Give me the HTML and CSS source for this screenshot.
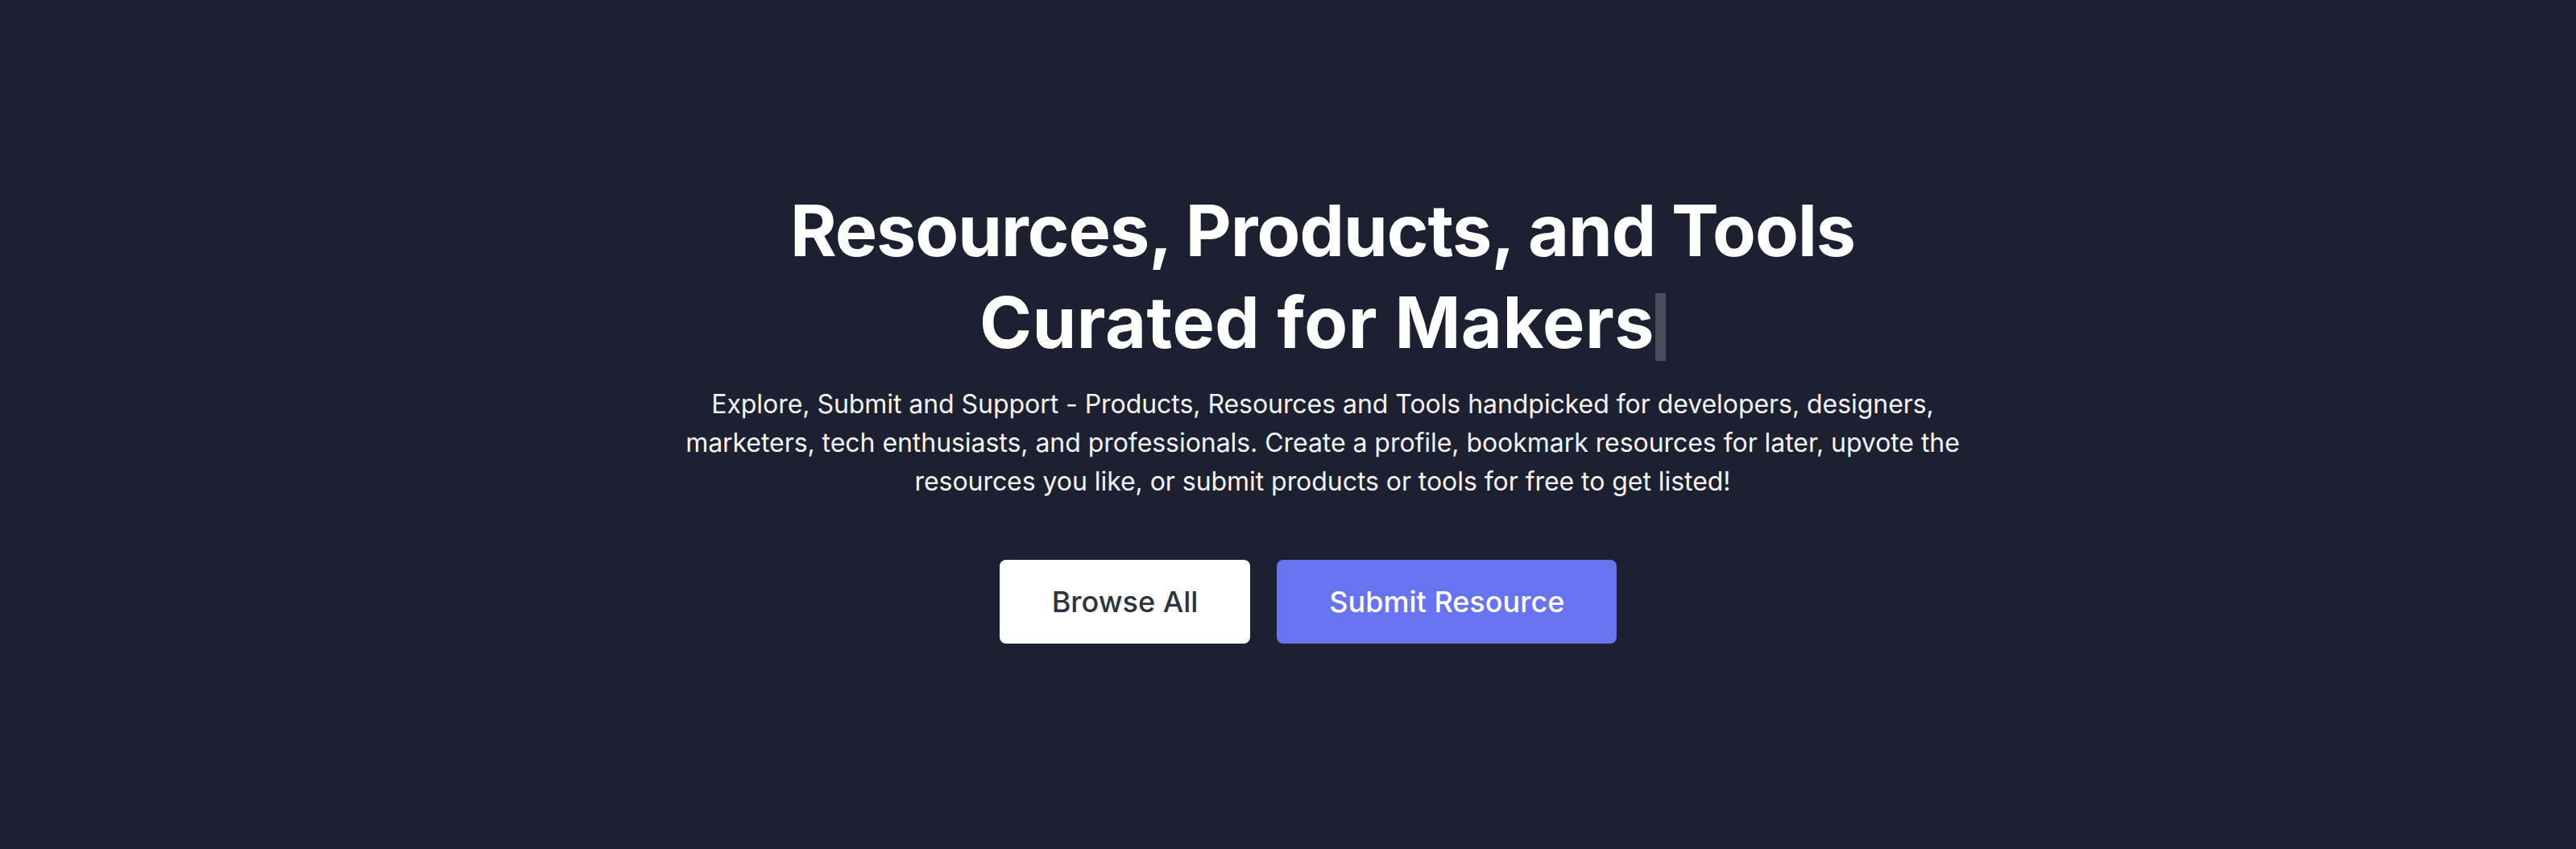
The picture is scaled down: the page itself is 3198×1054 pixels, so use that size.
FILE: index.html
```html
<!DOCTYPE html>
<html lang="en">
<head>
<meta charset="utf-8">
<title>Resources, Products, and Tools Curated for Makers</title>
<link rel="stylesheet" href="styles.css">
</head>
<body>
<section class="hero">
  <h1 class="hero-title">Resources, Products, and Tools<br><span class="title-line">Curated for Makers</span><span class="cursor"></span></h1>
  <p class="hero-text">Explore, Submit and Support - Products, Resources and Tools handpicked for developers, designers, marketers, tech enthusiasts, and professionals. Create a profile, bookmark resources for later, upvote the resources you like, or submit products or tools for free to get listed!</p>
  <div class="hero-actions">
    <a class="btn btn-light" href="#">Browse All</a>
    <a class="btn btn-primary" href="#">Submit Resource</a>
  </div>
</section>
</body>
</html>
```

FILE: styles.css
```css
html, body {
  margin: 0;
  padding: 0;
}
body {
  background: #1c2031;
  width: 3198px;
  height: 1054px;
  overflow: hidden;
  font-family: Inter, "Liberation Sans", sans-serif;
}
.hero {
  display: flex;
  flex-direction: column;
  align-items: center;
  padding-top: 229px;
  padding-left: 86px;
  text-align: center;
}
.hero-title {
  margin: 0;
  font-family: Inter, sans-serif;
  font-weight: 700;
  font-size: 88px;
  line-height: 114px;
  color: #ffffff;
  letter-spacing: -1px;
}
.title-line {
  letter-spacing: 0.5px;
}
.cursor {
  display: inline-block;
  width: 13px;
  height: 84px;
  background: #4a4e5c;
  vertical-align: -16px;
  margin-left: 1px;
}
.hero-text {
  margin: 21px 0 0;
  max-width: 1620px;
  font-size: 32px;
  line-height: 48px;
  letter-spacing: -0.05px;
  color: #f3f4f6;
}
.hero-actions {
  display: flex;
  gap: 33px;
  margin-top: 73px;
  margin-right: 36px;
}
.btn {
  display: flex;
  align-items: center;
  justify-content: center;
  height: 104px;
  padding: 0 65px;
  border-radius: 8px;
  font-family: Inter, sans-serif;
  font-weight: 500;
  font-size: 36px;
  text-decoration: none;
  box-sizing: border-box;
}
.btn-light {
  background: #ffffff;
  color: #2d3440;
}
.btn-primary {
  background: #6773ef;
  color: #ffffff;
}
```
